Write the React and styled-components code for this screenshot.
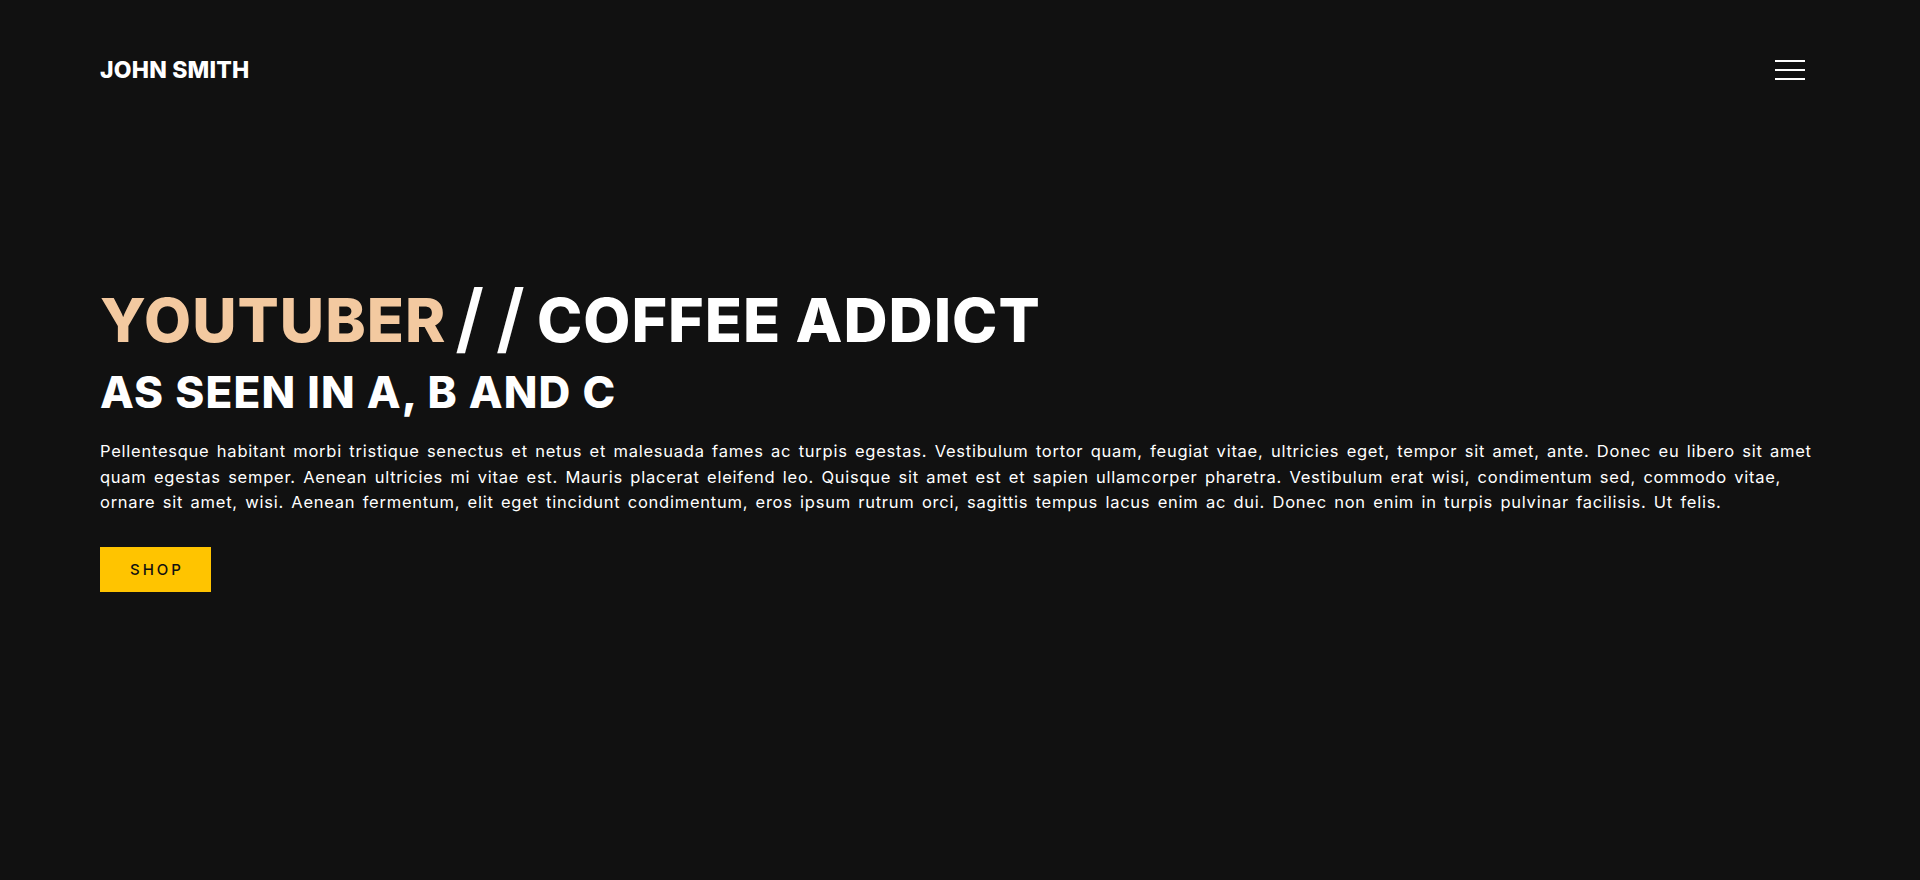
import styled, { createGlobalStyle } from 'styled-components';

const GlobalStyle = createGlobalStyle`
  html, body {
    margin: 0;
    padding: 0;
    background: #111111;
  }

  * {
    box-sizing: border-box;
  }
`;

const Page = styled.div`
  min-height: 100vh;
  background: #111111;
  color: #ffffff;
  font-family: 'Inter', 'Liberation Sans', sans-serif;
  display: flex;
  flex-direction: column;
`;

const Header = styled.header`
  height: 140px;
  padding: 0 100px;
  display: flex;
  align-items: center;
  justify-content: space-between;
`;

const Logo = styled.a`
  font-size: 23px;
  font-weight: 800;
  letter-spacing: 0.2px;
  color: #ffffff;
  text-decoration: none;
  text-transform: uppercase;
`;

const MenuButton = styled.button`
  width: 30px;
  height: 20px;
  margin-right: 15px;
  padding: 0;
  border: none;
  background: transparent;
  display: flex;
  flex-direction: column;
  justify-content: space-between;
  cursor: pointer;
`;

const MenuLine = styled.span`
  display: block;
  height: 2px;
  width: 100%;
  background: #ffffff;
`;

const Hero = styled.main`
  padding: 144px 100px 0;
`;

const Title = styled.h1`
  margin: 0;
  font-size: 61px;
  line-height: 1.2;
  font-weight: 800;
  text-transform: uppercase;
  letter-spacing: 1px;
`;

const Accent = styled.span`
  color: #f3c9a0;
`;

const Slashes = styled.span`
  display: inline-block;
  margin: 0 0 0 9px;
  font-size: 76px;
  line-height: 0;
  font-weight: 600;
  letter-spacing: 12px;
  vertical-align: -3px;
`;

const Subtitle = styled.h2`
  margin: 9px 0 0;
  font-size: 44px;
  line-height: 1.2;
  font-weight: 800;
  text-transform: uppercase;
  letter-spacing: 1.2px;
`;

const Text = styled.p`
  margin: 20px 0 0;
  font-size: 16.5px;
  line-height: 25.6px;
  font-weight: 400;
  letter-spacing: 0.75px;
  word-spacing: 2px;
`;

const ShopButton = styled.a`
  margin-top: 31px;
  width: 111px;
  height: 45px;
  display: inline-flex;
  align-items: center;
  justify-content: center;
  background: #ffc400;
  color: #111111;
  font-size: 15px;
  font-weight: 500;
  letter-spacing: 3px;
  text-transform: uppercase;
  text-decoration: none;
  padding-left: 3px;
`;

export default function App() {
  return (
    <Page>
      <GlobalStyle />
      <Header>
        <Logo href="#">John Smith</Logo>
        <MenuButton aria-label="Menu">
          <MenuLine />
          <MenuLine />
          <MenuLine />
        </MenuButton>
      </Header>
      <Hero>
        <Title>
          <Accent>Youtuber</Accent>
          <Slashes>//</Slashes>Coffee Addict
        </Title>
        <Subtitle>As seen in A, B and C</Subtitle>
        <Text>
          Pellentesque habitant morbi tristique senectus et netus et malesuada fames ac turpis egestas. Vestibulum tortor quam, feugiat vitae, ultricies eget, tempor sit amet, ante. Donec eu libero sit amet quam egestas semper. Aenean ultricies mi vitae est. Mauris placerat eleifend leo. Quisque sit amet est et sapien ullamcorper pharetra. Vestibulum erat wisi, condimentum sed, commodo vitae, ornare sit amet, wisi. Aenean fermentum, elit eget tincidunt condimentum, eros ipsum rutrum orci, sagittis tempus lacus enim ac dui. Donec non enim in turpis pulvinar facilisis. Ut felis.
        </Text>
        <ShopButton href="#">Shop</ShopButton>
      </Hero>
    </Page>
  );
}
